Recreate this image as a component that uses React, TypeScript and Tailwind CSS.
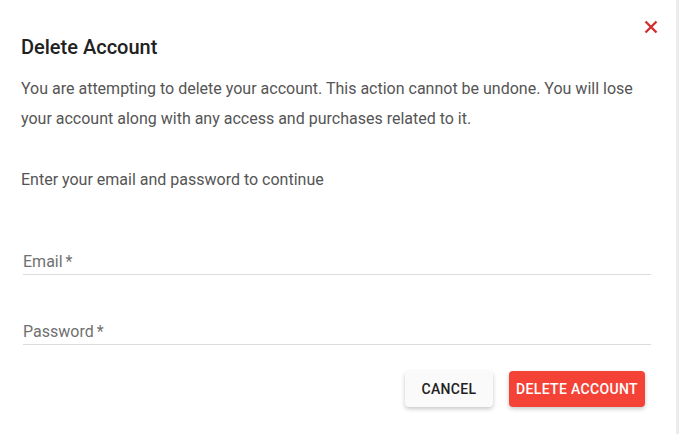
export default function App() {
  return (
    <div className="flex h-[434px] w-[679px] bg-[#ececec]" style={{ fontFamily: 'Roboto, "Liberation Sans", sans-serif' }}>
      <div className="relative flex w-[676px] flex-col bg-white px-[21px]">
        <button className="absolute right-[17px] top-[19px] text-[#d32f2f]" aria-label="close">
          <svg width="16" height="16" viewBox="0 0 16 16">
            <path d="M2.5 2.5 L13.5 13.5 M13.5 2.5 L2.5 13.5" stroke="currentColor" strokeWidth="2.4" />
          </svg>
        </button>
        <h2 className="mt-[34px] text-[20px] font-medium leading-[26px] text-[#212121]">Delete Account</h2>
        <p className="mt-[14px] text-[16px] leading-[30px] text-[#555]">
          You are attempting to delete your account. This action cannot be undone. You will lose your account along with any access and purchases related to it.
        </p>
        <p className="mt-[31px] text-[16px] leading-[30px] text-[#555]">Enter your email and password to continue</p>

        <div className="ml-[2px] mr-[4px] mt-[57px] border-b border-[#dcdcdc] pb-[2px]">
          <label className="block text-[16px] leading-[20px] text-[#707070]">
            Email<span className="ml-[3px]">*</span>
          </label>
        </div>
        <div className="ml-[2px] mr-[4px] mt-[47px] border-b border-[#dcdcdc] pb-[2px]">
          <label className="block text-[16px] leading-[20px] text-[#707070]">
            Password<span className="ml-[3px]">*</span>
          </label>
        </div>

        <div className="mt-[26px] flex justify-end gap-4 pr-[10px]">
          <button className="h-9 w-[88px] rounded bg-[#fafafa] text-[14px] font-medium tracking-wide text-[#212121] shadow-[0_2px_4px_rgba(0,0,0,0.22)]">
            CANCEL
          </button>
          <button className="h-9 w-[136px] rounded bg-[#f44336] text-[14px] font-medium tracking-wide text-white shadow-[0_2px_4px_rgba(0,0,0,0.22)]">
            DELETE ACCOUNT
          </button>
        </div>
      </div>
    </div>
  )
}
